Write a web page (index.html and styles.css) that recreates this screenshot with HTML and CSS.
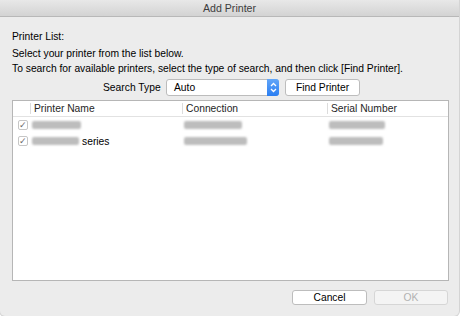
FILE: index.html
```html
<!DOCTYPE html>
<html lang="en">
<head>
  <meta charset="UTF-8" />
  <title>Add Printer</title>
  <link rel="stylesheet" href="styles.css">
</head>
<body>
  <div class="window">
    <div class="titlebar">Add Printer</div>

    <div class="content">
      <p class="label">Printer List:</p>
      <p class="instr">Select your printer from the list below.<br>To search for available printers, select the type of search, and then click [Find Printer].</p>

      <div class="search-row">
        <span class="search-label">Search Type</span>
        <div class="select">
          <span>Auto</span>
          <span class="stepper">
            <svg width="7" height="11" viewBox="0 0 7 11">
              <path d="M1 4 L3.5 1.5 L6 4 M1 7 L3.5 9.5 L6 7" fill="none" stroke="#fff" stroke-width="1.3"/>
            </svg>
          </span>
        </div>
        <button class="btn find">Find Printer</button>
      </div>

      <div class="table">
        <div class="row head">
          <span></span>
          <span class="hcell">Printer Name</span>
          <span class="hcell">Connection</span>
          <span class="hcell">Serial Number</span>
        </div>
        <div class="row">
          <span class="check"><i class="box">&#10003;</i></span>
          <span class="cell"><b class="blur" style="width:49px"></b></span>
          <span class="cell"><b class="blur" style="width:58px"></b></span>
          <span class="cell"><b class="blur" style="width:56px"></b></span>
        </div>
        <div class="row">
          <span class="check"><i class="box">&#10003;</i></span>
          <span class="cell"><b class="blur" style="width:47px"></b> series</span>
          <span class="cell"><b class="blur" style="width:63px"></b></span>
          <span class="cell"><b class="blur" style="width:54px"></b></span>
        </div>
      </div>

      <div class="footer">
        <button class="btn cancel">Cancel</button>
        <button class="btn ok" disabled>OK</button>
      </div>
    </div>
  </div>
</body>
</html>
```

FILE: styles.css
```css
body {
  margin: 0;
  font-family: "Liberation Sans", Arial, sans-serif;
  font-size: 10.3px;
  color: #000;
  background: #fff;
}

.window {
  width: 459px;
  height: 316px;
  background: #ececec;
  border-radius: 0 0 5px 5px;
  box-shadow: 0 0 0 1px #d4d4d4;
  overflow: hidden;
}

.titlebar {
  height: 16px;
  line-height: 16px;
  text-align: center;
  font-size: 10.6px;
  color: #3c3c3c;
  background: linear-gradient(#e8e8e8, #d3d3d3);
  border-bottom: 1px solid #b8b8b8;
}

.content {
  padding: 0 10px 0 12px;
}

.label {
  margin: 12px 0 0;
  line-height: 15px;
}

.instr {
  margin: 2px 0 0;
  line-height: 15px;
}

.search-row {
  display: flex;
  align-items: center;
  margin-top: 3px;
  height: 17px;
  padding-left: 91px;
}

.search-label {
  width: 63px;
}

.select {
  display: flex;
  align-items: center;
  justify-content: space-between;
  box-sizing: border-box;
  width: 113px;
  height: 17px;
  padding-left: 7px;
  background: #fff;
  border: 1px solid #bcbcbc;
  border-radius: 3px;
}

.stepper {
  display: flex;
  align-items: center;
  justify-content: center;
  width: 12px;
  height: 17px;
  margin-right: -1px;
  background: linear-gradient(#63a6f8, #2a7ef2);
  border-radius: 0 3px 3px 0;
}

.btn {
  box-sizing: border-box;
  height: 16px;
  padding: 0;
  font: inherit;
  color: #000;
  background: #fff;
  border: 1px solid #bdbdbd;
  border-radius: 3px;
}

.find {
  width: 75px;
  height: 17px;
  margin-left: 6px;
}

.table {
  box-sizing: border-box;
  margin-top: 4px;
  width: 437px;
  height: 181px;
  background: #fff;
  border: 1px solid #b6b6b6;
}

.row {
  display: grid;
  grid-template-columns: 17px 152px 145px 1fr;
  height: 16px;
  align-items: center;
}

.row.head {
  height: 15px;
  border-bottom: 1px solid #e2e2e2;
  color: #262626;
}

.hcell {
  padding-left: 3px;
  border-left: 1px solid #dcdcdc;
  line-height: 11px;
}

.cell {
  display: flex;
  align-items: center;
  padding-left: 2px;
}

.check {
  display: flex;
  justify-content: center;
  padding-left: 2px;
}

.box {
  box-sizing: border-box;
  width: 10px;
  height: 10px;
  border: 1px solid #c6c6c6;
  border-radius: 2px;
  font-style: normal;
  font-size: 9px;
  line-height: 8px;
  text-align: center;
  color: #6a6a6a;
}

.blur {
  display: inline-block;
  height: 8px;
  margin-right: 3px;
  background: #bdbdbd;
  border-radius: 2px;
  filter: blur(1.3px);
}

.footer {
  display: flex;
  justify-content: flex-end;
  gap: 7px;
  margin-top: 9px;
  padding-right: 1px;
}

.cancel {
  width: 75px;
  height: 15px;
}

.ok {
  width: 74px;
  height: 15px;
  color: #b2b2b2;
  background: #f4f4f4;
  border-color: #d6d6d6;
}
```
